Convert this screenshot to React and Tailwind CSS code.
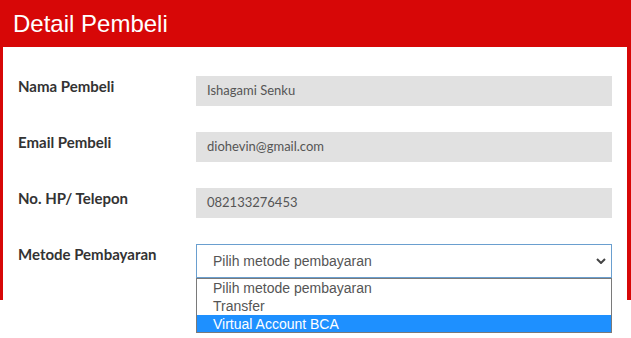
import React from 'react';

const fields = [
  { label: 'Nama Pembeli', value: 'Ishagami Senku' },
  { label: 'Email Pembeli', value: 'diohevin@gmail.com' },
  { label: 'No. HP/ Telepon', value: '082133276453' },
];

const options = ['Pilih metode pembayaran', 'Transfer', 'Virtual Account BCA'];

export default function App() {
  return (
    <div className="relative w-[631px] h-[338px] bg-white overflow-hidden">
      <div className="h-[300px] border-l-[3px] border-r-[4px] border-[#d70707] bg-white">
        <div className="h-[47px] flex items-center pl-[10px] pt-[1px] bg-[#d70707] text-white text-[24px] font-['Liberation_Sans',Arial,sans-serif]">
          Detail Pembeli
        </div>
        <div className="flex flex-col gap-[26px] pt-[29px] pl-[15px]">
          {fields.map((f) => (
            <div key={f.label} className="flex items-start">
              <div className="w-[178px] leading-[20px] text-[15px] font-bold text-[#333] font-['Lato',sans-serif]">
                {f.label}
              </div>
              <div className="w-[416px] h-[30px] flex items-center px-[11px] bg-[#e1e1e1] text-[13px] text-[#555] font-['Lato',sans-serif]">
                {f.value}
              </div>
            </div>
          ))}
          <div className="flex items-start">
            <div className="w-[178px] leading-[20px] text-[15px] font-bold text-[#333] font-['Lato',sans-serif]">
              Metode Pembayaran
            </div>
            <div className="relative w-[416px]">
              <div className="h-[34px] flex items-center justify-between pl-[16px] pr-[4px] border border-[#6a9fcf] bg-white text-[14px] text-[#555] font-['Liberation_Sans',Arial,sans-serif]">
                <span>Pilih metode pembayaran</span>
                <svg width="10" height="6" viewBox="0 0 10 6" className="mr-[1px]">
                  <path d="M1 1l4 4 4-4" fill="none" stroke="#444" strokeWidth="2" />
                </svg>
              </div>
              <div className="absolute left-0 top-[34px] w-[416px] border border-[#7a7a7a] bg-white text-[14px] text-[#555] font-['Liberation_Sans',Arial,sans-serif]">
                {options.map((o, i) => (
                  <div
                    key={o}
                    className={`${i === 2 ? 'h-[17px] bg-[#1e90ff] text-white' : 'h-[18px]'} flex items-center pl-[16px] leading-none`}
                  >
                    {o}
                  </div>
                ))}
              </div>
            </div>
          </div>
        </div>
      </div>
    </div>
  );
}
